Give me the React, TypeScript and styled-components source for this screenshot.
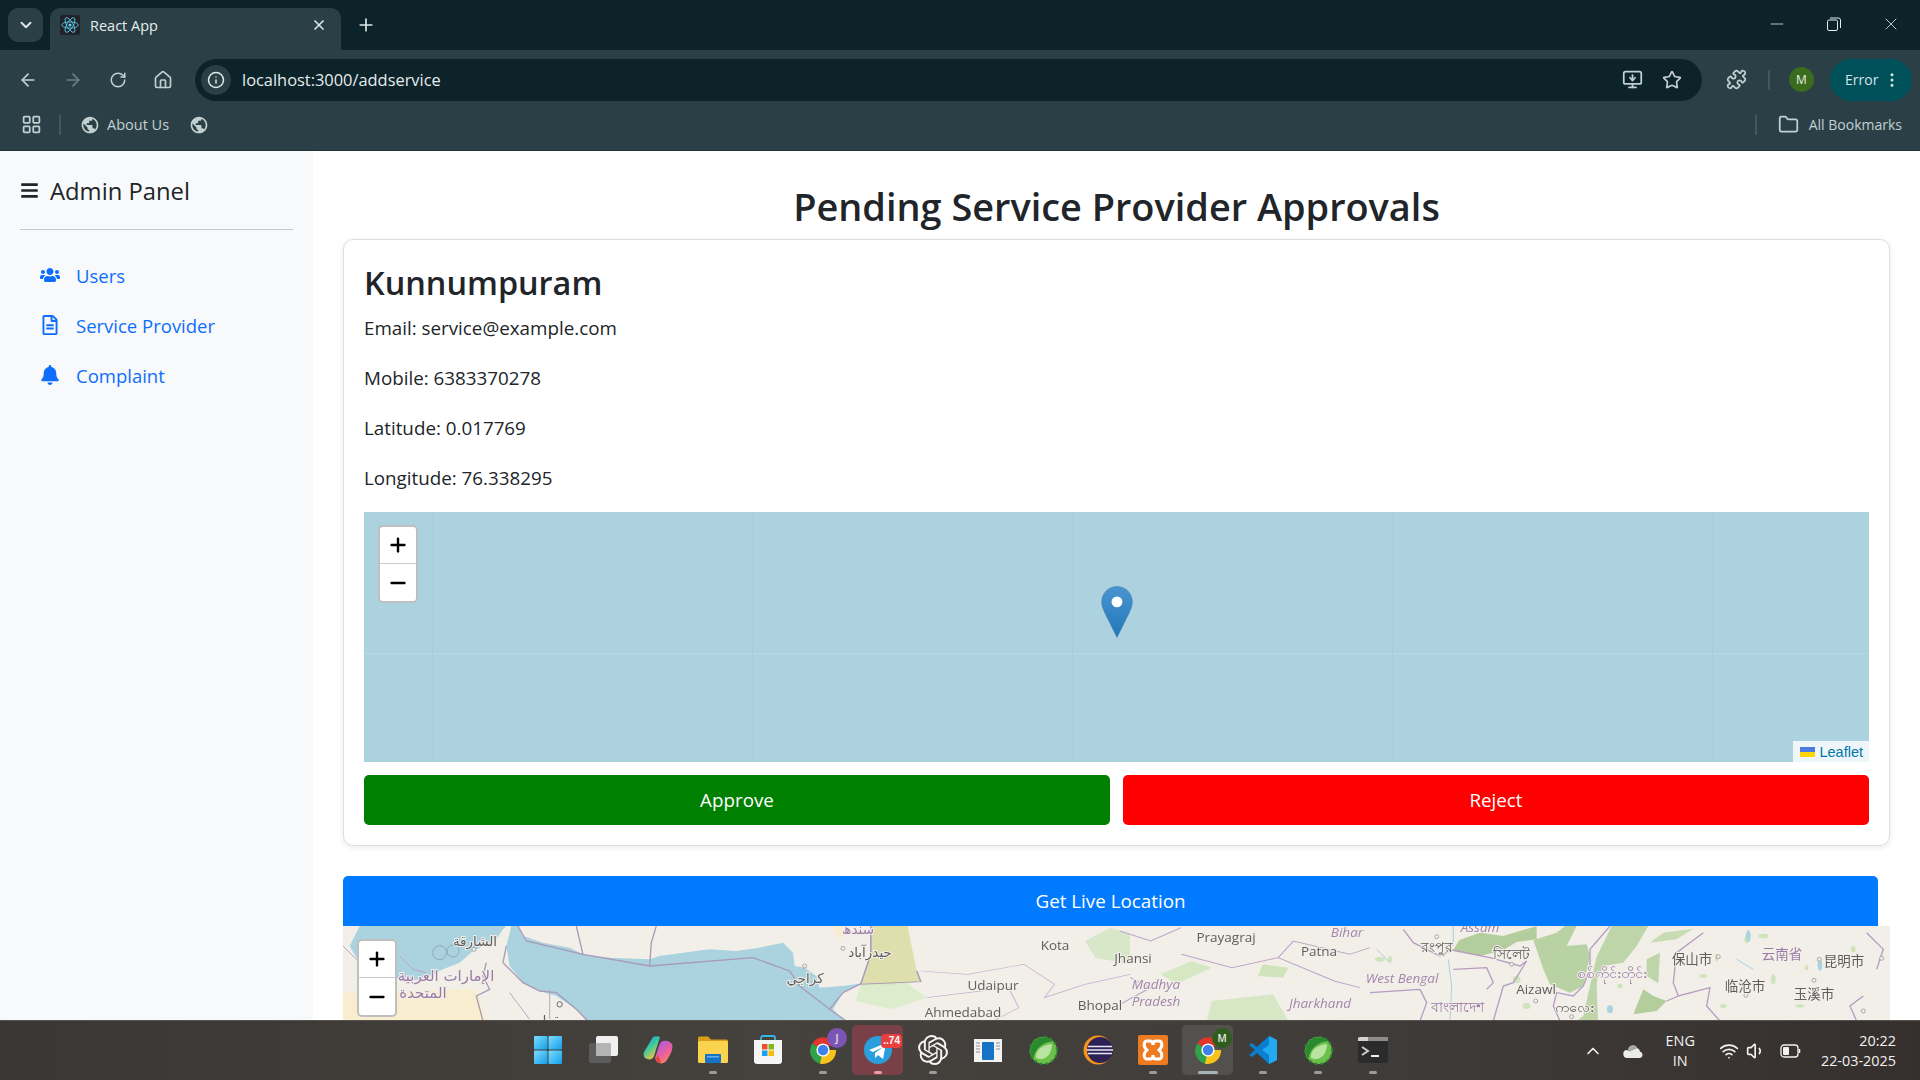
import React from 'react';
import styled, { createGlobalStyle } from 'styled-components';
import {
  ArrowLeft,
  ArrowRight,
  RotateCw,
  Home,
  Info,
  Star,
  Puzzle,
  MonitorDown,
  EllipsisVertical,
  Folder,
  LayoutGrid,
  ChevronDown,
  ChevronUp,
  Plus,
  X,
  Minus,
  Wifi,
  Volume1,
} from 'lucide-react';
import { FaBars, FaUsers, FaRegFileAlt, FaBell } from 'react-icons/fa';
import { MdPublic } from 'react-icons/md';
import { SiOpenai } from 'react-icons/si';

const UI_FONT = '"Open Sans", "Noto Sans", sans-serif';

const GlobalStyle = createGlobalStyle`
  html, body {
    margin: 0;
    padding: 0;
    height: 100%;
    overflow: hidden;
    background: #fff;
  }
  * {
    box-sizing: border-box;
  }
  body {
    font-family: ${UI_FONT};
  }
`;

const Screen = styled.div`
  width: 1920px;
  height: 1080px;
  display: flex;
  flex-direction: column;
  overflow: hidden;
`;

/* browser chrome */

const TabStrip = styled.div`
  height: 50px;
  background: #0b2329;
  display: flex;
  align-items: flex-end;
  padding-left: 8px;
  color: #dfe7e8;
`;

const TabSearch = styled.div`
  width: 35px;
  height: 34px;
  margin-bottom: 8px;
  border-radius: 10px;
  background: #2a4046;
  display: flex;
  align-items: center;
  justify-content: center;
`;

const Tab = styled.div`
  width: 291px;
  height: 42px;
  margin-left: 7px;
  padding: 0 14px 8px 10px;
  border-radius: 10px 10px 0 0;
  background: #2a4046;
  display: flex;
  align-items: center;
  gap: 10px;
`;

const Favicon = styled.div`
  width: 20px;
  height: 20px;
  border-radius: 2px;
  background: #20232a;
  display: flex;
  align-items: center;
  justify-content: center;
`;

const TabTitle = styled.span`
  flex: 1;
  font-size: 14.5px;
  color: #e6ecec;
`;

const NewTab = styled.div`
  width: 50px;
  height: 50px;
  display: flex;
  align-items: center;
  justify-content: center;
`;

const WindowControls = styled.div`
  margin-left: auto;
  height: 50px;
  display: flex;
  align-items: center;
  padding-right: 1px;
`;

const WindowButton = styled.div`
  width: 57px;
  height: 50px;
  display: flex;
  align-items: center;
  justify-content: center;
  padding-bottom: 2px;
`;

const Toolbar = styled.div`
  height: 60px;
  padding: 0 8px 1px 5px;
  background: #2a4046;
  display: flex;
  align-items: center;
  color: #c3d0d2;
`;

const NavButton = styled.div<{ $dim?: boolean }>`
  width: 45px;
  display: flex;
  justify-content: center;
  color: ${(p) => (p.$dim ? '#6f8185' : '#c3d0d2')};
`;

const Omnibox = styled.div`
  flex: 1;
  height: 42px;
  margin-left: 10px;
  padding: 0 10px 0 6px;
  border-radius: 21px;
  background: #0b2329;
  display: flex;
  align-items: center;
`;

const InfoChip = styled.div`
  width: 30px;
  height: 30px;
  border-radius: 50%;
  background: #2a4046;
  color: #dfe7e8;
  display: flex;
  align-items: center;
  justify-content: center;
`;

const Url = styled.span`
  flex: 1;
  margin-left: 11px;
  padding-bottom: 1px;
  font-size: 16.4px;
  color: #e6ecec;
`;

const OmniAction = styled.div`
  width: 40px;
  display: flex;
  justify-content: center;
  color: #c3d0d2;
`;

const ToolbarIcon = styled.div`
  width: 24px;
  margin-left: 22px;
  display: flex;
  justify-content: center;
`;

const Divider = styled.div<{ $height: number; $left: number }>`
  width: 2px;
  height: ${(p) => p.$height}px;
  margin-left: ${(p) => p.$left}px;
  background: #43575c;
`;

const Avatar = styled.div`
  width: 25px;
  height: 25px;
  margin-left: 19px;
  border-radius: 50%;
  background: #3a6b1f;
  color: #e8f0e0;
  font-size: 12px;
  display: flex;
  align-items: center;
  justify-content: center;
`;

const ErrorPill = styled.div`
  width: 82px;
  height: 42px;
  margin-left: 16px;
  padding-left: 15px;
  border-radius: 21px;
  background: #00505a;
  color: #d5e4e6;
  font-size: 14px;
  display: flex;
  align-items: center;
  gap: 5px;
`;

const BookmarksBar = styled.div`
  height: 41px;
  background: #2a4046;
  border-bottom: 1px solid #1f3136;
  padding: 0 18px 11px 21px;
  display: flex;
  align-items: center;
  color: #c3d0d2;
  font-size: 14.5px;
`;

const Bookmark = styled.div<{ $left: number; $gap?: number }>`
  margin-left: ${(p) => p.$left}px;
  display: flex;
  align-items: center;
  gap: ${(p) => p.$gap ?? 7}px;
`;

const BookmarksRight = styled.div`
  margin-left: auto;
  display: flex;
  align-items: center;
  font-size: 14px;
`;

/* page */

const Page = styled.div`
  flex: 1;
  min-height: 0;
  display: flex;
  background: #fff;
`;

const Sidebar = styled.aside`
  width: 313px;
  flex-shrink: 0;
  background: #f8f9fa;
  padding: 0 20px;
`;

const Brand = styled.div`
  height: 79px;
  padding-top: 1px;
  border-bottom: 1px solid #c5c8cb;
  display: flex;
  align-items: center;
  gap: 11px;
  color: #212529;
  font-size: 23.8px;
`;

const NavList = styled.nav`
  margin-top: 20px;
  display: flex;
  flex-direction: column;
`;

const NavLink = styled.a`
  height: 50px;
  padding-left: 20px;
  display: flex;
  align-items: center;
  gap: 16px;
  color: #0d6efd;
  font-size: 18.5px;
  text-decoration: none;
`;

const NavIcon = styled.span`
  width: 20px;
  display: flex;
  justify-content: center;
`;

const Main = styled.main`
  flex: 1;
  min-width: 0;
  padding: 0 30px;
  overflow: hidden;
`;

const PageTitle = styled.h1`
  height: 88px;
  margin: 0;
  padding-top: 24px;
  text-align: center;
  color: #212529;
  font-size: 37.9px;
  line-height: 62px;
  font-weight: 600;
  white-space: nowrap;
`;

const Card = styled.section`
  height: 607px;
  padding: 20px;
  border: 1px solid #dcdfe2;
  border-radius: 10px;
  box-shadow: 0 2px 6px rgba(0, 0, 0, 0.08);
  background: #fff;
`;

const Name = styled.h2`
  margin: 0;
  height: 44px;
  color: #212529;
  font-size: 32.4px;
  line-height: 44px;
  font-weight: 600;
`;

const DetailList = styled.div`
  margin-bottom: 8px;
`;

const Detail = styled.p`
  margin: 0;
  height: 50px;
  color: #212529;
  font-size: 18.8px;
  line-height: 48px;
`;

const LeafletMap = styled.div<{ $height: number }>`
  position: relative;
  height: ${(p) => p.$height}px;
  overflow: hidden;
  background: #acd2e0;
`;

const OceanTiles = styled.div`
  height: 100%;
  background-image:
    linear-gradient(to right, rgba(160, 205, 205, 0.55) 1px, transparent 1px),
    linear-gradient(to bottom, rgba(184, 218, 230, 0.9) 1px, transparent 1px);
  background-size: 320px 320px;
  background-position: 68px -179px;
`;

const ZoomControl = styled.div`
  position: absolute;
  top: 13px;
  left: 14px;
  width: 40px;
  border: 2px solid rgba(0, 0, 0, 0.25);
  border-radius: 5px;
  background: #fff;
`;

const ZoomButton = styled.div<{ $first?: boolean }>`
  height: 37px;
  display: flex;
  align-items: center;
  justify-content: center;
  color: #000;
  border-bottom: ${(p) => (p.$first ? '1px solid #ccc' : 'none')};
`;

const MarkerPin = styled.svg`
  position: absolute;
  left: 737px;
  top: 74px;
`;

const Attribution = styled.div`
  position: absolute;
  right: 0;
  bottom: 0;
  height: 21px;
  padding: 0 6px 0 7px;
  background: rgba(255, 255, 255, 0.8);
  display: flex;
  align-items: center;
  gap: 4px;
  color: #0078a8;
  font-family: "Liberation Sans", sans-serif;
  font-size: 14.5px;
`;

const Flag = styled.span`
  width: 15px;
  height: 10px;
  background: linear-gradient(to bottom, #4c7be1 50%, #ffd500 50%);
`;

const ButtonRow = styled.div`
  margin-top: 13px;
  display: grid;
  grid-template-columns: 1fr 1fr;
  gap: 13px;
`;

const ActionButton = styled.button<{ $color: string }>`
  height: 50px;
  border: none;
  border-radius: 5px;
  background: ${(p) => p.$color};
  color: #fff;
  font-family: ${UI_FONT};
  font-size: 18.8px;
`;

const LiveButton = styled.button`
  display: block;
  width: calc(100% - 12px);
  height: 50px;
  margin-top: 30px;
  border: none;
  border-radius: 5px 5px 0 0;
  background: #007bff;
  color: #fff;
  font-family: ${UI_FONT};
  font-size: 18.8px;
`;

const WorldMap = styled.div`
  position: relative;
  height: 400px;
  overflow: hidden;
  background: #f2efe9;
`;

const MapDrawing = styled.svg`
  display: block;
  filter: blur(0.6px);
`;

/* taskbar */

const Taskbar = styled.footer`
  height: 60px;
  flex-shrink: 0;
  display: grid;
  grid-template-columns: 1fr auto 1fr;
  align-items: center;
  background: linear-gradient(90deg, #3b3734, #45413d 40%, #403c39 70%, #35302e);
  border-top: 1px solid #55514e;
  color: #f1f1f1;
`;

const TaskIcons = styled.div`
  grid-column: 2;
  display: flex;
  margin-top: -1px;
`;

const TaskCell = styled.div<{ $tile?: string }>`
  position: relative;
  width: 55px;
  height: 50px;
  display: flex;
  align-items: center;
  justify-content: center;
  &::before {
    content: '';
    position: absolute;
    inset: 0 2px;
    border-radius: 5px;
    background: ${(p) => p.$tile || 'transparent'};
  }
  & > svg,
  & > span {
    position: relative;
  }
`;

const RunDot = styled.span<{ $wide?: boolean; $color?: string }>`
  && {
    position: absolute;
  }
  bottom: 1px;
  left: 50%;
  transform: translateX(-50%);
  width: ${(p) => (p.$wide ? 20 : 8)}px;
  height: 3px;
  border-radius: 2px;
  background: ${(p) => p.$color || '#9b9b9b'};
`;

const Badge = styled.span<{ $color: string }>`
  && {
    position: absolute;
  }
  top: 3px;
  right: 3px;
  min-width: 20px;
  height: 20px;
  border-radius: 50%;
  background: ${(p) => p.$color};
  color: #e8e8e8;
  font-size: 10px;
  font-weight: 600;
  display: flex;
  align-items: center;
  justify-content: center;
`;

const CountBadge = styled.span`
  && {
    position: absolute;
  }
  top: 9px;
  right: 3px;
  height: 14px;
  padding: 0 2px;
  border-radius: 4px;
  background: #e8403e;
  color: #fff;
  font-family: "Liberation Sans", sans-serif;
  font-size: 10px;
  font-weight: 700;
  line-height: 14px;
`;

const Tray = styled.div`
  grid-column: 3;
  justify-self: end;
  display: flex;
  align-items: center;
  padding-right: 24px;
`;

const TrayIcon = styled.div<{ $left: number }>`
  margin-left: ${(p) => p.$left}px;
  display: flex;
`;

const TrayText = styled.div<{ $left: number; $right?: boolean }>`
  margin-left: ${(p) => p.$left}px;
  font-size: 14.4px;
  line-height: 20px;
  text-align: ${(p) => (p.$right ? 'right' : 'center')};
`;

/* drawn marks */

const ReactLogo = () => (
  <svg width="18" height="18" viewBox="-12 -12 24 24" fill="none" stroke="#61dafb" strokeWidth="1">
    <circle r="2" fill="#61dafb" stroke="none" />
    <ellipse rx="11" ry="4.2" />
    <ellipse rx="11" ry="4.2" transform="rotate(60)" />
    <ellipse rx="11" ry="4.2" transform="rotate(120)" />
  </svg>
);

const RestoreIcon = () => (
  <svg width="14" height="14" viewBox="0 0 14 14" fill="none" stroke="#e6ecec" strokeWidth="1">
    <rect x="0.5" y="3" width="10" height="10.5" rx="1.5" />
    <path d="M3 1h8.5a2 2 0 0 1 2 2v8" />
  </svg>
);

const ClosedPin = () => (
  <MarkerPin width="32" height="52" viewBox="0 0 25 41">
    <defs>
      <linearGradient id="pin" x1="0" y1="0" x2="0" y2="1">
        <stop offset="0" stopColor="#4a94cf" />
        <stop offset="1" stopColor="#2177bb" />
      </linearGradient>
    </defs>
    <path
      d="M12.5 0.5C5.8 0.5 0.5 5.8 0.5 12.5c0 3 1 5.5 2.4 8.5L12.5 40.5 22.1 21c1.4-3 2.4-5.5 2.4-8.5C24.5 5.8 19.2 0.5 12.5 0.5z"
      fill="url(#pin)"
      stroke="#3b82b8"
      strokeWidth="0.6"
    />
    <circle cx="12.5" cy="12.5" r="4.3" fill="#fff" />
  </MarkerPin>
);

const WindowsLogo = () => (
  <svg width="30" height="30" viewBox="0 0 30 30">
    <defs>
      <linearGradient id="win" x1="0" y1="0" x2="1" y2="1">
        <stop offset="0" stopColor="#7fdcff" />
        <stop offset="1" stopColor="#119fe8" />
      </linearGradient>
    </defs>
    <rect x="1" y="1" width="13.5" height="13.5" rx="1" fill="url(#win)" />
    <rect x="15.5" y="1" width="13.5" height="13.5" rx="1" fill="url(#win)" />
    <rect x="1" y="15.5" width="13.5" height="13.5" rx="1" fill="url(#win)" />
    <rect x="15.5" y="15.5" width="13.5" height="13.5" rx="1" fill="url(#win)" />
  </svg>
);

const TaskView = () => (
  <svg width="30" height="30" viewBox="0 0 30 30">
    <rect x="1" y="8" width="22" height="20" rx="2" fill="#5c5c5c" />
    <rect x="8" y="1" width="22" height="20" rx="2" fill="#f0f0f0" />
    <rect x="8" y="8" width="15" height="13" rx="1" fill="#b4b4b4" />
  </svg>
);

const Copilot = () => (
  <svg width="30" height="30" viewBox="0 0 30 30">
    <defs>
      <linearGradient id="copA" x1="0" y1="0" x2="0.6" y2="1">
        <stop offset="0" stopColor="#1f8fe8" />
        <stop offset="0.5" stopColor="#38c9a0" />
        <stop offset="1" stopColor="#f6c83c" />
      </linearGradient>
      <linearGradient id="copB" x1="0.2" y1="0" x2="0.8" y2="1">
        <stop offset="0" stopColor="#a65be0" />
        <stop offset="0.6" stopColor="#f0609a" />
        <stop offset="1" stopColor="#f79048" />
      </linearGradient>
    </defs>
    <path d="M10 2c2-1 5-1 7 0L11 21c-1 3-4 4-7 3-3-1-4-4-3-7z" fill="url(#copA)" />
    <path d="M20 6c3-1 7 0 9 3 1 3 0 6-1 9l-4 7c-2 3-5 4-8 3-3-1-3-3-4-5l3-9c1-4 2-7 5-8z" fill="url(#copB)" />
    <path d="M13 24c1 3 3 4 5 4l-3-8z" fill="#e2452c" />
  </svg>
);

const Explorer = () => (
  <svg width="30" height="30" viewBox="0 0 30 30">
    <path d="M0 3a1.5 1.5 0 0 1 1.5-1.5H10l3 3h15.5A1.5 1.5 0 0 1 30 6v3H0z" fill="#d99f17" />
    <rect x="0" y="6" width="30" height="22" rx="1.5" fill="#fbd44f" />
    <rect x="7" y="19" width="16" height="9" rx="1" fill="#1672c4" />
    <rect x="9" y="21" width="12" height="1.5" fill="#5fb4ee" />
  </svg>
);

const Store = () => (
  <svg width="30" height="30" viewBox="0 0 30 30">
    <path d="M8 6V3a2 2 0 0 1 2-2h10a2 2 0 0 1 2 2v3" fill="none" stroke="#35b5e6" strokeWidth="1.8" />
    <path d="M1 5h28v21a3 3 0 0 1-3 3H4a3 3 0 0 1-3-3z" fill="#f5f5f5" />
    <rect x="9" y="9" width="5.5" height="5.5" fill="#e8542a" />
    <rect x="15.5" y="9" width="5.5" height="5.5" fill="#7fb820" />
    <rect x="9" y="15.5" width="5.5" height="5.5" fill="#1aa0e8" />
    <rect x="15.5" y="15.5" width="5.5" height="5.5" fill="#fbbc09" />
  </svg>
);

const ChromeLogo = () => (
  <svg width="30" height="30" viewBox="0 0 30 30">
    <path d="M15 15L4.2 8.4A13.5 13.5 0 0 1 28.1 11H15z" fill="#e2352b" />
    <path d="M15 15L4.2 8.4A13.5 13.5 0 0 0 12 28.7L16 19z" fill="#2fa24a" />
    <path d="M15 15h13.1A13.5 13.5 0 0 1 12 28.7z" fill="#f8c41c" />
    <circle cx="15" cy="15" r="6.6" fill="#fff" />
    <circle cx="15" cy="15" r="5.2" fill="#3f80ea" />
  </svg>
);

const Telegram = () => (
  <svg width="30" height="30" viewBox="0 0 30 30">
    <circle cx="15" cy="15" r="14" fill="#2a9fdc" />
    <path d="M6 15l17-7-3 16-5-4-3 3v-5l8-6-10 5z" fill="#fff" />
  </svg>
);

const NewsWindow = () => (
  <svg width="30" height="30" viewBox="0 0 30 30">
    <rect x="1" y="4" width="28" height="23" fill="#f2f2f2" />
    <rect x="9" y="7" width="12" height="18" rx="1" fill="#1672c4" />
    <path d="M3 8h4M3 11h4M3 14h4M3 17h4M23 8h4M23 11h4M23 14h4" stroke="#8f8f8f" strokeWidth="1" />
  </svg>
);

const SpringLeaf = () => (
  <svg width="30" height="30" viewBox="0 0 30 30">
    <circle cx="15.5" cy="15.5" r="13.5" fill="#6cc04a" />
    <path d="M15.5 2.5a13 13 0 0 0-13 13c0 3 1 6 3 8C7 14 14 7 26 6a13 13 0 0 0-10.5-3.5z" fill="#2b8a2f" />
    <circle cx="15.5" cy="15.5" r="13.5" fill="none" stroke="#2b8a2f" strokeWidth="2" strokeDasharray="2 2.2" strokeDashoffset="1" pathLength="60" />
    <path d="M8 23c-1-8 6-13 16-14 0 8-4 14-10 15-3 .5-4-.5-6-1z" fill="#d2efbd" opacity="0.75" />
  </svg>
);

const Eclipse = () => (
  <svg width="30" height="30" viewBox="0 0 30 30">
    <circle cx="15" cy="15" r="14.5" fill="#f7941e" />
    <circle cx="17" cy="15" r="13" fill="#2c2255" />
    <path d="M5 11.5h24M4 15h26M5 18.5h24" stroke="#e8e6f4" strokeWidth="1.6" />
  </svg>
);

const Xampp = () => (
  <svg width="30" height="30" viewBox="0 0 30 30">
    <rect width="30" height="30" rx="2" fill="#ee7b22" />
    <path
      d="M9 6h3c2 0 3 2 3 4 0-2 1-4 3-4h3c3 0 4 5 1 8l-1 1 1 1c3 3 2 8-1 8h-3c-2 0-3-2-3-4 0 2-1 4-3 4H9c-3 0-4-5-1-8l1-1-1-1C5 11 6 6 9 6z"
      fill="none"
      stroke="#fff"
      strokeWidth="3"
    />
  </svg>
);

const VsCode = () => (
  <svg width="30" height="30" viewBox="0 0 30 30">
    <path d="M21 1l8 4v20l-8 4-12-11-5 4-3-2 6-5-6-5 3-2 5 4z" fill="#0a7fd0" />
    <path d="M21 1l8 4v20l-8 4V20l-7-5 7-5z" fill="#23a9f2" />
  </svg>
);

const TerminalApp = () => (
  <svg width="30" height="30" viewBox="0 0 30 30">
    <rect x="0" y="2" width="30" height="26" rx="2" fill="#2b2b2b" />
    <path d="M0 4a2 2 0 0 1 2-2h28v4H0z" fill="#8c8c8c" />
    <path d="M0 4a2 2 0 0 1 2-2h8v4H0z" fill="#d4d4d4" />
    <path d="M4 12l6 4-6 4" fill="none" stroke="#cfcfcf" strokeWidth="2" />
    <path d="M13 21h8" stroke="#f0f0f0" strokeWidth="2" />
  </svg>
);

const OneDrive = () => (
  <svg width="21" height="14" viewBox="0 0 21 14">
    <path d="M5 6a5 5 0 0 1 9.4-2.3L7 8z" fill="#a8a8a8" />
    <path d="M4.6 14A4 4 0 0 1 4 6l3 1.5L14 4a4 4 0 0 1 3 3.4A3.4 3.4 0 0 1 17 14z" fill="#ececec" />
  </svg>
);

const Battery = () => (
  <svg width="21" height="14" viewBox="0 0 21 14" fill="none">
    <rect x="1" y="1" width="17" height="12" rx="3" stroke="#f1f1f1" strokeWidth="1.3" />
    <rect x="3" y="3" width="6" height="8" rx="1" fill="#f1f1f1" />
    <path d="M19.5 5v4" stroke="#f1f1f1" strokeWidth="1.5" />
  </svg>
);

const tasks = [
  { id: 'start', icon: <WindowsLogo /> },
  { id: 'view', icon: <TaskView /> },
  { id: 'copilot', icon: <Copilot /> },
  { id: 'explorer', icon: <Explorer />, dot: true },
  { id: 'store', icon: <Store /> },
  { id: 'chrome-j', icon: <ChromeLogo />, dot: true, badge: 'J', badgeColor: '#7a55b5' },
  { id: 'telegram', icon: <Telegram />, dot: true, count: '..74', tile: '#7a4048', dotColor: '#f09aa8' },
  { id: 'chatgpt', icon: <SiOpenai size={30} color="#f4f4f4" />, dot: true },
  { id: 'news', icon: <NewsWindow /> },
  { id: 'spring-a', icon: <SpringLeaf /> },
  { id: 'eclipse', icon: <Eclipse /> },
  { id: 'xampp', icon: <Xampp />, dot: true },
  {
    id: 'chrome-m',
    icon: <ChromeLogo />,
    wide: true,
    badge: 'M',
    badgeColor: '#2f5d1e',
    tile: 'rgba(255,255,255,0.1)',
    dotColor: '#a7b4b8',
  },
  { id: 'vscode', icon: <VsCode />, dot: true },
  { id: 'spring-b', icon: <SpringLeaf />, dot: true },
  { id: 'terminal', icon: <TerminalApp />, dot: true },
];

const details = [
  'Email: service@example.com',
  'Mobile: 6383370278',
  'Latitude: 0.017769',
  'Longitude: 76.338295',
];

const navItems = [
  { label: 'Users', icon: <FaUsers size={20} /> },
  { label: 'Service Provider', icon: <FaRegFileAlt size={20} /> },
  { label: 'Complaint', icon: <FaBell size={20} /> },
];

const ARABIC = '"DejaVu Sans", "Noto Sans", sans-serif';
const CJK = '"Noto Sans CJK SC", sans-serif';
const REGION = '#9b7ba6';

// place names, x and y are page pixels
const mapLabels = [
  { x: 475, y: 945, t: 'الشارقة', f: ARABIC },
  { x: 446, y: 980, t: 'الإمارات العربية', f: ARABIC, c: REGION, s: 15 },
  { x: 423, y: 997, t: 'المتحدة', f: ARABIC, c: REGION, s: 15 },
  { x: 870, y: 956, t: 'حيدرآباد', f: ARABIC },
  { x: 805, y: 982, t: 'كراجي', f: ARABIC },
  { x: 858, y: 933, t: 'سندھ', f: ARABIC, c: REGION },
  { x: 560, y: 1024, t: 'مسقط', f: ARABIC },
  { x: 1055, y: 949, t: 'Kota' },
  { x: 993, y: 989, t: 'Udaipur' },
  { x: 963, y: 1016, t: 'Ahmedabad' },
  { x: 1100, y: 1009, t: 'Bhopal' },
  { x: 1226, y: 941, t: 'Prayagraj' },
  { x: 1319, y: 955, t: 'Patna' },
  { x: 1133, y: 962, t: 'Jhansi' },
  { x: 1536, y: 993, t: 'Aizawl' },
  { x: 1347, y: 936, t: 'Bihar', c: '#a384ad', i: true },
  { x: 1156, y: 988, t: 'Madhya', c: '#a384ad', i: true },
  { x: 1156, y: 1005, t: 'Pradesh', c: '#a384ad', i: true },
  { x: 1320, y: 1007, t: 'Jharkhand', c: '#a384ad', i: true },
  { x: 1402, y: 982, t: 'West Bengal', c: '#a384ad', i: true },
  { x: 1480, y: 931, t: 'Assam', c: '#a384ad', i: true },
  { x: 1437, y: 951, t: 'রংপুর' },
  { x: 1511, y: 958, t: 'সিলেট' },
  { x: 1457, y: 1011, t: 'বাংলাদেশ', c: REGION },
  { x: 1574, y: 1011, t: 'ကလေး' },
  { x: 1612, y: 977, t: 'စစ်ကိုင်းတိုင်း', c: REGION },
  { x: 1692, y: 963, t: '保山市', f: CJK },
  { x: 1782, y: 958, t: '云南省', f: CJK, c: REGION },
  { x: 1844, y: 965, t: '昆明市', f: CJK },
  { x: 1745, y: 990, t: '临沧市', f: CJK },
  { x: 1814, y: 998, t: '玉溪市', f: CJK },
];

// small city rings, in crop units of the two 3x views
const leftDots = [[393, 70], [1385, 120], [1500, 67]];
const rightDots = [[200, 32], [425, 115], [497, 225], [605, 272], [1045, 92], [1348, 100], [1332, 163], [1128, 208], [1480, 255], [1535, 97]];
const flecks = [
  [30, 100, 30, 14], [60, 100, 14, 20], [1040, 95, 10, 24], [1180, 30, 30, 14], [1130, 40, 14, 24], [1000, 150, 24, 10], [1060, 240, 20, 12],
  [1210, 160, 14, 30], [1310, 125, 12, 16], [1420, 110, 30, 12], [1290, 240, 26, 10], [440, 160, 24, 22], [470, 240, 24, 18], [750, 180, 16, 14], [1450, 70, 14, 20],
];

const BaseMap = () => (
  <MapDrawing width="1547" height="400" viewBox="0 0 1547 400">
    {/* Gulf and Arabian sea */}
    <g transform="scale(0.3333)">
      <path d="M0 200L400 190 435 300H0z" fill="#f8edcf" />
      <path
        d="M505 0L490 60 500 120 540 170 590 195 640 210 700 250 735 290H1510L1470 250 1500 200 1560 172 1500 180 1430 185 1420 150 1385 125 1355 120 1350 80 1320 50 1250 65 1180 75 1100 70 1020 80 950 90 920 100 800 95 720 85 680 65 600 50 540 30 525 0z"
        fill="#aad3df"
      />
      <path
        d="M50 0H490L480 10 460 40 420 60 390 75 350 110 300 130 250 155 200 165 150 155 60 130 20 60z"
        fill="#aad3df"
      />
      <path
        d="M525 0L550 45 720 85 920 120 1230 95 1340 135 1370 180 1460 250 1510 285M940 0L925 50 920 120M700 0L720 85M480 110L540 170 590 195 640 200 700 250 735 285M430 110L420 150 440 190 400 210 420 285M480 110L490 60M1460 250L1500 200 1560 170"
        fill="none"
        stroke="#a99ab8"
        strokeWidth="4"
      />
      <path d="M0 60L40 100 100 110M170 90L210 130 250 140M500 200L560 280M620 190V280" fill="none" stroke="#b9a7c4" strokeWidth="3" />
      <circle cx="290" cy="80" r="21" fill="none" stroke="#8fa7bd" strokeWidth="3" />
      <circle cx="330" cy="75" r="18" fill="none" stroke="#8fa7bd" strokeWidth="3" />
      <circle cx="650" cy="235" r="8" fill="none" stroke="#666" strokeWidth="3" />
      <path d="M1470 0H1500L1490 50z" fill="#f8edcf" />
      {leftDots.map(([x, y]) => (
        <circle key={x} cx={x} cy={y} r="6" fill="#f2efe9" stroke="#888" strokeWidth="2" />
      ))}
    </g>
    {/* Gujarat to Madhya Pradesh */}
    <g transform="translate(-13,-5) scale(0.5102,0.3333)">
      <path d="M1060 15H1132L1150 150 1158 182 1100 192 1040 190 1060 100z" fill="#dfdfae" />
      <path d="M1040 190L1130 185 1170 230 1100 265 1030 240z" fill="#d5ebc2" opacity="0.7" />
      <path d="M1480 60L1530 20 1568 40 1568 130 1500 110z" fill="#cfe4ba" opacity="0.7" />
      <path d="M1150 150L1158 182 1040 190M1060 15L1060 100 1040 190" fill="none" stroke="#a99ab8" strokeWidth="3" />
      <path
        d="M1158 150L1250 160 1360 130 1420 190 1400 230 1480 190 1568 160M1170 230L1330 200 1350 260 1300 300"
        fill="none"
        stroke="#c8afcf"
        strokeWidth="2"
      />
    </g>
    {/* Uttar Pradesh to Bengal */}
    <g transform="translate(777,-5) scale(0.5102,0.3333)">
      <path d="M80 160L140 120 180 140 110 190z" fill="#d6e8c3" />
      <path d="M280 130L330 140 320 170 270 165z" fill="#cfe4ba" />
      <path d="M180 240L300 220 330 300 170 300z" fill="#cfe4ba" opacity="0.8" />
      <path
        d="M0 30L60 60 120 20M120 100L220 140 310 110 340 60 450 100 490 80M310 110L420 180 470 200M0 250L60 200 20 170"
        fill="none"
        stroke="#c0a8ca"
        strokeWidth="3"
      />
    </g>
    {/* Bangladesh, Myanmar, Yunnan */}
    <g transform="translate(1027,0) scale(0.3333)">
      {flecks.map(([x, y, w, h]) => (
        <ellipse key={`${x}-${y}`} cx={x} cy={y} rx={w / 2} ry={h / 2} fill="#cfe4ba" />
      ))}
      <path d="M250 72L268 42 330 20 400 30 500 0V40L440 48 400 72 330 90z" fill="#b3cd9c" />
      <path d="M490 42L560 20 585 0H620L590 60 650 55 660 90 640 180 600 200 540 175 520 130z" fill="#b9d2a3" />
      <path d="M680 92L725 0H835L800 60 760 110 700 120 680 170 684 285H620L640 270 660 180z" fill="#bdd5a8" />
      <path d="M830 100L870 80 865 172 830 150z" fill="#bdd5a8" />
      <path d="M790 265L820 190 850 210 890 225 860 255z" fill="#b3cd9c" />
      <path d="M840 50L880 20 970 8 920 40z" fill="#c7dcb3" />
      <path
        d="M100 10L130 50 210 90 245 72 360 95 450 120 470 105 430 170 400 180 370 285M250 130L350 125 370 170 350 190M150 190L170 230 150 285M0 200L150 190M720 0L660 70 660 130 640 180 610 210 560 200 550 240 570 285M1000 20L920 80 910 170 925 210 1020 185 1010 240 1050 285M890 225L925 210M1490 20L1540 70 1520 130M1480 210L1440 240 1460 285"
        fill="none"
        stroke="#b79cc2"
        strokeWidth="4"
      />
      <path d="M250 0V60M235 100L245 180 240 285M20 70L60 110M1100 100L1150 130" fill="none" stroke="#a8d0e2" strokeWidth="3" />
      <ellipse cx="720" cy="250" rx="9" ry="12" fill="#aad3df" />
      <ellipse cx="1350" cy="118" rx="7" ry="16" fill="#aad3df" />
      <ellipse cx="1135" cy="30" rx="7" ry="18" fill="#aad3df" />
      {rightDots.map(([x, y]) => (
        <circle key={x} cx={x} cy={y} r="6" fill="#f2efe9" stroke="#888" strokeWidth="2" />
      ))}
    </g>
    <g transform="translate(-343,-925)" textAnchor="middle" fontSize="13.5" fill="#5e5e5e" fontFamily="'Open Sans', 'Noto Sans', sans-serif">
      {mapLabels.map((l) => (
        <text key={l.t} x={l.x} y={l.y} fill={l.c} fontSize={l.s} fontFamily={l.f} fontStyle={l.i ? 'italic' : undefined} stroke="#f2efe9" strokeWidth="2" paintOrder="stroke">
          {l.t}
        </text>
      ))}
    </g>
  </MapDrawing>
);

const MapZoom = () => (
  <ZoomControl>
    <ZoomButton $first>
      <Plus size={22} strokeWidth={2.6} />
    </ZoomButton>
    <ZoomButton>
      <Minus size={22} strokeWidth={2.6} />
    </ZoomButton>
  </ZoomControl>
);

const App: React.FC = () => {
  return (
    <Screen>
      <GlobalStyle />
      <TabStrip>
        <TabSearch>
          <ChevronDown size={18} strokeWidth={2.5} />
        </TabSearch>
        <Tab>
          <Favicon>
            <ReactLogo />
          </Favicon>
          <TabTitle>React App</TabTitle>
          <X size={16} strokeWidth={2.5} />
        </Tab>
        <NewTab>
          <Plus size={20} strokeWidth={2} />
        </NewTab>
        <WindowControls>
          <WindowButton>
            <Minus size={20} strokeWidth={1} />
          </WindowButton>
          <WindowButton>
            <RestoreIcon />
          </WindowButton>
          <WindowButton>
            <X size={20} strokeWidth={1} />
          </WindowButton>
        </WindowControls>
      </TabStrip>

      <Toolbar>
        <NavButton>
          <ArrowLeft size={20} />
        </NavButton>
        <NavButton $dim>
          <ArrowRight size={20} />
        </NavButton>
        <NavButton>
          <RotateCw size={18} />
        </NavButton>
        <NavButton>
          <Home size={20} />
        </NavButton>
        <Omnibox>
          <InfoChip>
            <Info size={18} />
          </InfoChip>
          <Url>localhost:3000/addservice</Url>
          <OmniAction>
            <MonitorDown size={21} />
          </OmniAction>
          <OmniAction>
            <Star size={20} />
          </OmniAction>
        </Omnibox>
        <ToolbarIcon>
          <Puzzle size={21} />
        </ToolbarIcon>
        <Divider $height={20} $left={20} />
        <Avatar>M</Avatar>
        <ErrorPill>
          Error
          <EllipsisVertical size={18} />
        </ErrorPill>
      </Toolbar>

      <BookmarksBar>
        <LayoutGrid size={21} />
        <Divider $height={20} $left={17} />
        <Bookmark $left={19}>
          <MdPublic size={20} />
          About Us
        </Bookmark>
        <Bookmark $left={20}>
          <MdPublic size={20} />
        </Bookmark>
        <BookmarksRight>
          <Divider $height={20} $left={0} />
          <Bookmark $left={21} $gap={10}>
            <Folder size={21} />
            All Bookmarks
          </Bookmark>
        </BookmarksRight>
      </BookmarksBar>

      <Page>
        <Sidebar>
          <Brand>
            <FaBars size={19} />
            Admin Panel
          </Brand>
          <NavList>
            {navItems.map((item) => (
              <NavLink href="#" key={item.label}>
                <NavIcon>{item.icon}</NavIcon>
                {item.label}
              </NavLink>
            ))}
          </NavList>
        </Sidebar>
        <Main>
          <PageTitle>Pending Service Provider Approvals</PageTitle>
          <Card>
            <Name>Kunnumpuram</Name>
            <DetailList>
              {details.map((line) => (
                <Detail key={line}>{line}</Detail>
              ))}
            </DetailList>
            <LeafletMap $height={250}>
              <OceanTiles />
              <MapZoom />
              <ClosedPin />
              <Attribution>
                <Flag />
                Leaflet
              </Attribution>
            </LeafletMap>
            <ButtonRow>
              <ActionButton $color="#008000">Approve</ActionButton>
              <ActionButton $color="#ff0000">Reject</ActionButton>
            </ButtonRow>
          </Card>
          <LiveButton>Get Live Location</LiveButton>
          <WorldMap>
            <BaseMap />
            <MapZoom />
          </WorldMap>
        </Main>
      </Page>

      <Taskbar>
        <TaskIcons>
          {tasks.map((task) => (
            <TaskCell key={task.id} $tile={task.tile}>
              {task.icon}
              {task.badge && <Badge $color={task.badgeColor as string}>{task.badge}</Badge>}
              {task.count && <CountBadge>{task.count}</CountBadge>}
              {(task.dot || task.wide) && <RunDot $wide={task.wide} $color={task.dotColor} />}
            </TaskCell>
          ))}
        </TaskIcons>
        <Tray>
          <TrayIcon $left={0}>
            <ChevronUp size={20} />
          </TrayIcon>
          <TrayIcon $left={20}>
            <OneDrive />
          </TrayIcon>
          <TrayText $left={22}>
            ENG
            <br />
            IN
          </TrayText>
          <TrayIcon $left={24}>
            <Wifi size={20} />
          </TrayIcon>
          <TrayIcon $left={7}>
            <Volume1 size={20} />
          </TrayIcon>
          <TrayIcon $left={14}>
            <Battery />
          </TrayIcon>
          <TrayText $left={20} $right>
            20:22
            <br />
            22-03-2025
          </TrayText>
        </Tray>
      </Taskbar>
    </Screen>
  );
};

export default App;
